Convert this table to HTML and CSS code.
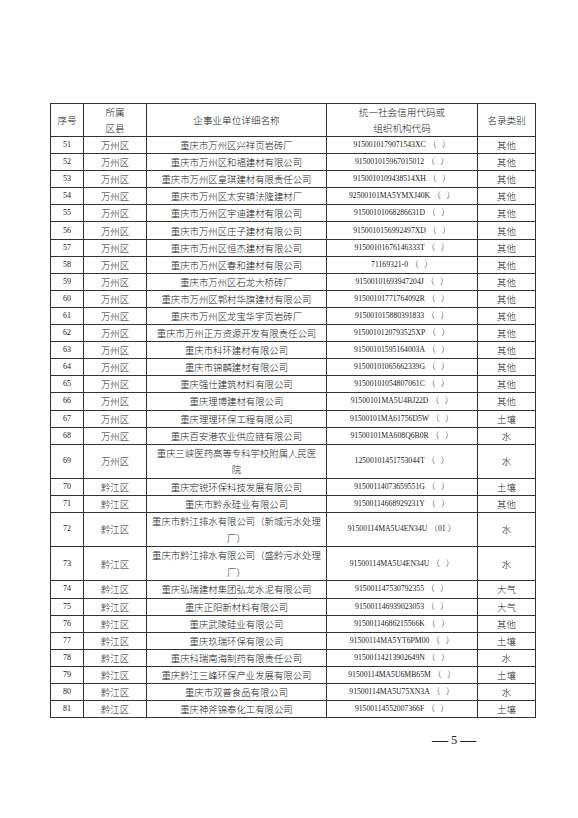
FILE: index.html
```html
<!DOCTYPE html>
<html lang="zh">
<head>
<meta charset="utf-8">
<link rel="stylesheet" href="styles.css">
</head>
<body>
<div class="page">
<table class="list">
<colgroup><col class="c1"><col class="c2"><col class="c3"><col class="c4"><col class="c5"></colgroup>
<thead>
<tr class="head"><th>序号</th><th>所属<br>区县</th><th>企事业单位详细名称</th><th>统一社会信用代码或<br>组织机构代码</th><th>名录类别</th></tr>
</thead>
<tbody>
<tr><td class="n">51</td><td>万州区</td><td>重庆市万州区兴祥页岩砖厂</td><td class="code">9150010179071543XC<span class="p">（&nbsp;&nbsp;&nbsp;）</span></td><td>其他</td></tr>
<tr><td class="n">52</td><td>万州区</td><td>重庆市万州区和福建材有限公司</td><td class="code">915001015967015012<span class="p">（&nbsp;&nbsp;&nbsp;）</span></td><td>其他</td></tr>
<tr><td class="n">53</td><td>万州区</td><td>重庆市万州区皇琪建材有限责任公司</td><td class="code">9150010109438514XH<span class="p">（&nbsp;&nbsp;&nbsp;）</span></td><td>其他</td></tr>
<tr><td class="n">54</td><td>万州区</td><td>重庆市万州区太安镇法隆建材厂</td><td class="code">92500101MA5YMXJ40K<span class="p">（&nbsp;&nbsp;&nbsp;）</span></td><td>其他</td></tr>
<tr><td class="n">55</td><td>万州区</td><td>重庆市万州区宇迪建材有限公司</td><td class="code">91500101068286631D<span class="p">（&nbsp;&nbsp;&nbsp;）</span></td><td>其他</td></tr>
<tr><td class="n">56</td><td>万州区</td><td>重庆市万州区庄子建材有限公司</td><td class="code">9150010156992497XD<span class="p">（&nbsp;&nbsp;&nbsp;）</span></td><td>其他</td></tr>
<tr><td class="n">57</td><td>万州区</td><td>重庆市万州区恒杰建材有限公司</td><td class="code">91500101676146333T<span class="p">（&nbsp;&nbsp;&nbsp;）</span></td><td>其他</td></tr>
<tr><td class="n">58</td><td>万州区</td><td>重庆市万州区春和建材有限公司</td><td class="code">71169321-0<span class="p">（&nbsp;&nbsp;&nbsp;）</span></td><td>其他</td></tr>
<tr><td class="n">59</td><td>万州区</td><td>重庆市万州区石龙大桥砖厂</td><td class="code">91500101693947204J<span class="p">（&nbsp;&nbsp;&nbsp;）</span></td><td>其他</td></tr>
<tr><td class="n">60</td><td>万州区</td><td>重庆市万州区郭村华旗建材有限公司</td><td class="code">91500101771764092R<span class="p">（&nbsp;&nbsp;&nbsp;）</span></td><td>其他</td></tr>
<tr><td class="n">61</td><td>万州区</td><td>重庆市万州区龙宝华宇页岩砖厂</td><td class="code">915001015880391833<span class="p">（&nbsp;&nbsp;&nbsp;）</span></td><td>其他</td></tr>
<tr><td class="n">62</td><td>万州区</td><td>重庆市万州正方资源开发有限责任公司</td><td class="code">9150010120793525XP<span class="p">（&nbsp;&nbsp;&nbsp;）</span></td><td>其他</td></tr>
<tr><td class="n">63</td><td>万州区</td><td>重庆市科环建材有限公司</td><td class="code">91500101595164003A<span class="p">（&nbsp;&nbsp;&nbsp;）</span></td><td>其他</td></tr>
<tr><td class="n">64</td><td>万州区</td><td>重庆市锦麟建材有限公司</td><td class="code">91500101065662339G<span class="p">（&nbsp;&nbsp;&nbsp;）</span></td><td>其他</td></tr>
<tr><td class="n">65</td><td>万州区</td><td>重庆强仕建筑材料有限公司</td><td class="code">91500101054807061C<span class="p">（&nbsp;&nbsp;&nbsp;）</span></td><td>其他</td></tr>
<tr><td class="n">66</td><td>万州区</td><td>重庆理博建材有限公司</td><td class="code">91500101MA5U4BJ22D<span class="p">（&nbsp;&nbsp;&nbsp;）</span></td><td>其他</td></tr>
<tr><td class="n">67</td><td>万州区</td><td>重庆理理环保工程有限公司</td><td class="code">91500101MA61756D5W<span class="p">（&nbsp;&nbsp;&nbsp;）</span></td><td>土壤</td></tr>
<tr><td class="n">68</td><td>万州区</td><td>重庆百安港农业供应链有限公司</td><td class="code">91500101MA608Q6B0R<span class="p">（&nbsp;&nbsp;&nbsp;）</span></td><td>水</td></tr>
<tr class="dbl"><td class="n">69</td><td>万州区</td><td>重庆三峡医药高等专科学校附属人民医<br>院</td><td class="code">12500101451753044T<span class="p">（&nbsp;&nbsp;&nbsp;）</span></td><td>水</td></tr>
<tr><td class="n">70</td><td>黔江区</td><td>重庆宏锐环保科技发展有限公司</td><td class="code">91500114073659551G<span class="p">（&nbsp;&nbsp;&nbsp;）</span></td><td>土壤</td></tr>
<tr><td class="n">71</td><td>黔江区</td><td>重庆市黔永硅业有限公司</td><td class="code">91500114668929231Y<span class="p">（&nbsp;&nbsp;&nbsp;）</span></td><td>其他</td></tr>
<tr class="dbl"><td class="n">72</td><td>黔江区</td><td>重庆市黔江排水有限公司（新城污水处理<br>厂）</td><td class="code">91500114MA5U4EN34U<span class="p">（</span>01<span class="p">）</span></td><td>水</td></tr>
<tr class="dbl"><td class="n">73</td><td>黔江区</td><td>重庆市黔江排水有限公司（盛黔污水处理<br>厂）</td><td class="code">91500114MA5U4EN34U<span class="p">（&nbsp;&nbsp;&nbsp;）</span></td><td>水</td></tr>
<tr><td class="n">74</td><td>黔江区</td><td>重庆弘瑞建材集团弘龙水泥有限公司</td><td class="code">915001147530792355<span class="p">（&nbsp;&nbsp;&nbsp;）</span></td><td>大气</td></tr>
<tr><td class="n">75</td><td>黔江区</td><td>重庆正阳新材料有限公司</td><td class="code">915001146939023053<span class="p">（&nbsp;&nbsp;&nbsp;）</span></td><td>大气</td></tr>
<tr><td class="n">76</td><td>黔江区</td><td>重庆武陵硅业有限公司</td><td class="code">91500114686215566K<span class="p">（&nbsp;&nbsp;&nbsp;）</span></td><td>其他</td></tr>
<tr><td class="n">77</td><td>黔江区</td><td>重庆玖瑞环保有限公司</td><td class="code">91500114MA5YT6PM00<span class="p">（&nbsp;&nbsp;&nbsp;）</span></td><td>土壤</td></tr>
<tr><td class="n">78</td><td>黔江区</td><td>重庆科瑞南海制药有限责任公司</td><td class="code">91500114213902649N<span class="p">（&nbsp;&nbsp;&nbsp;）</span></td><td>水</td></tr>
<tr><td class="n">79</td><td>黔江区</td><td>重庆黔江三峰环保产业发展有限公司</td><td class="code">91500114MA5U6MB65M<span class="p">（&nbsp;&nbsp;&nbsp;）</span></td><td>土壤</td></tr>
<tr><td class="n">80</td><td>黔江区</td><td>重庆市双普食品有限公司</td><td class="code">91500114MA5U75XN3A<span class="p">（&nbsp;&nbsp;&nbsp;）</span></td><td>水</td></tr>
<tr><td class="n">81</td><td>黔江区</td><td>重庆神斧锦泰化工有限公司</td><td class="code">91500114552007366F<span class="p">（&nbsp;&nbsp;&nbsp;）</span></td><td>土壤</td></tr>
</tbody>
</table>
<div class="pageno"><span class="dash">—</span><span class="num">5</span><span class="dash">—</span></div>
</div>
</body>
</html>
```
FILE: styles.css
```css
html, body {
  margin: 0;
  padding: 0;
  background: #fff;
}
.page {
  padding: 103px 0 0 50px;
  color: #1a1a1a;
  font-family: "Noto Sans CJK SC", "Noto Sans", sans-serif;
}
.list {
  border-collapse: collapse;
  width: 485px;
  table-layout: fixed;
  border: 1px solid #222;
}
.c1 { width: 33px; }
.c2 { width: 63px; }
.c3 { width: 180px; }
.c4 { width: 151px; }
.c5 { width: 58px; }
.list th,
.list td {
  border: 1px solid #333;
  padding: 0;
  text-align: center;
  vertical-align: middle;
  font-size: 9.4px;
  font-weight: 300;
  line-height: 12px;
  height: 16.1px;
  white-space: nowrap;
  overflow: hidden;
}
.list .dbl td {
  line-height: 16.6px;
  height: 33.2px;
}
.list .head th {
  height: 32px;
  line-height: 16px;
  font-size: 9.6px;
}
.list td.n {
  font-family: "Liberation Serif", serif;
  font-size: 8px;
  font-weight: 400;
}
.list td.code {
  font-family: "Liberation Serif", serif;
  font-size: 7.7px;
  font-weight: 400;
}
.code .p {
  font-family: "Noto Sans CJK SC", sans-serif;
  font-size: 8.6px;
  font-weight: 300;
  line-height: 0;
  margin-left: 2px;
}
.pageno {
  display: flex;
  align-items: center;
  gap: 3px;
  padding-left: 382px;
  margin-top: 14px;
  font-family: "Liberation Serif", serif;
  color: #222;
}
.dash {
  font-size: 16px;
  line-height: 16px;
}
.num {
  font-size: 12.5px;
  line-height: 16px;
}
```
